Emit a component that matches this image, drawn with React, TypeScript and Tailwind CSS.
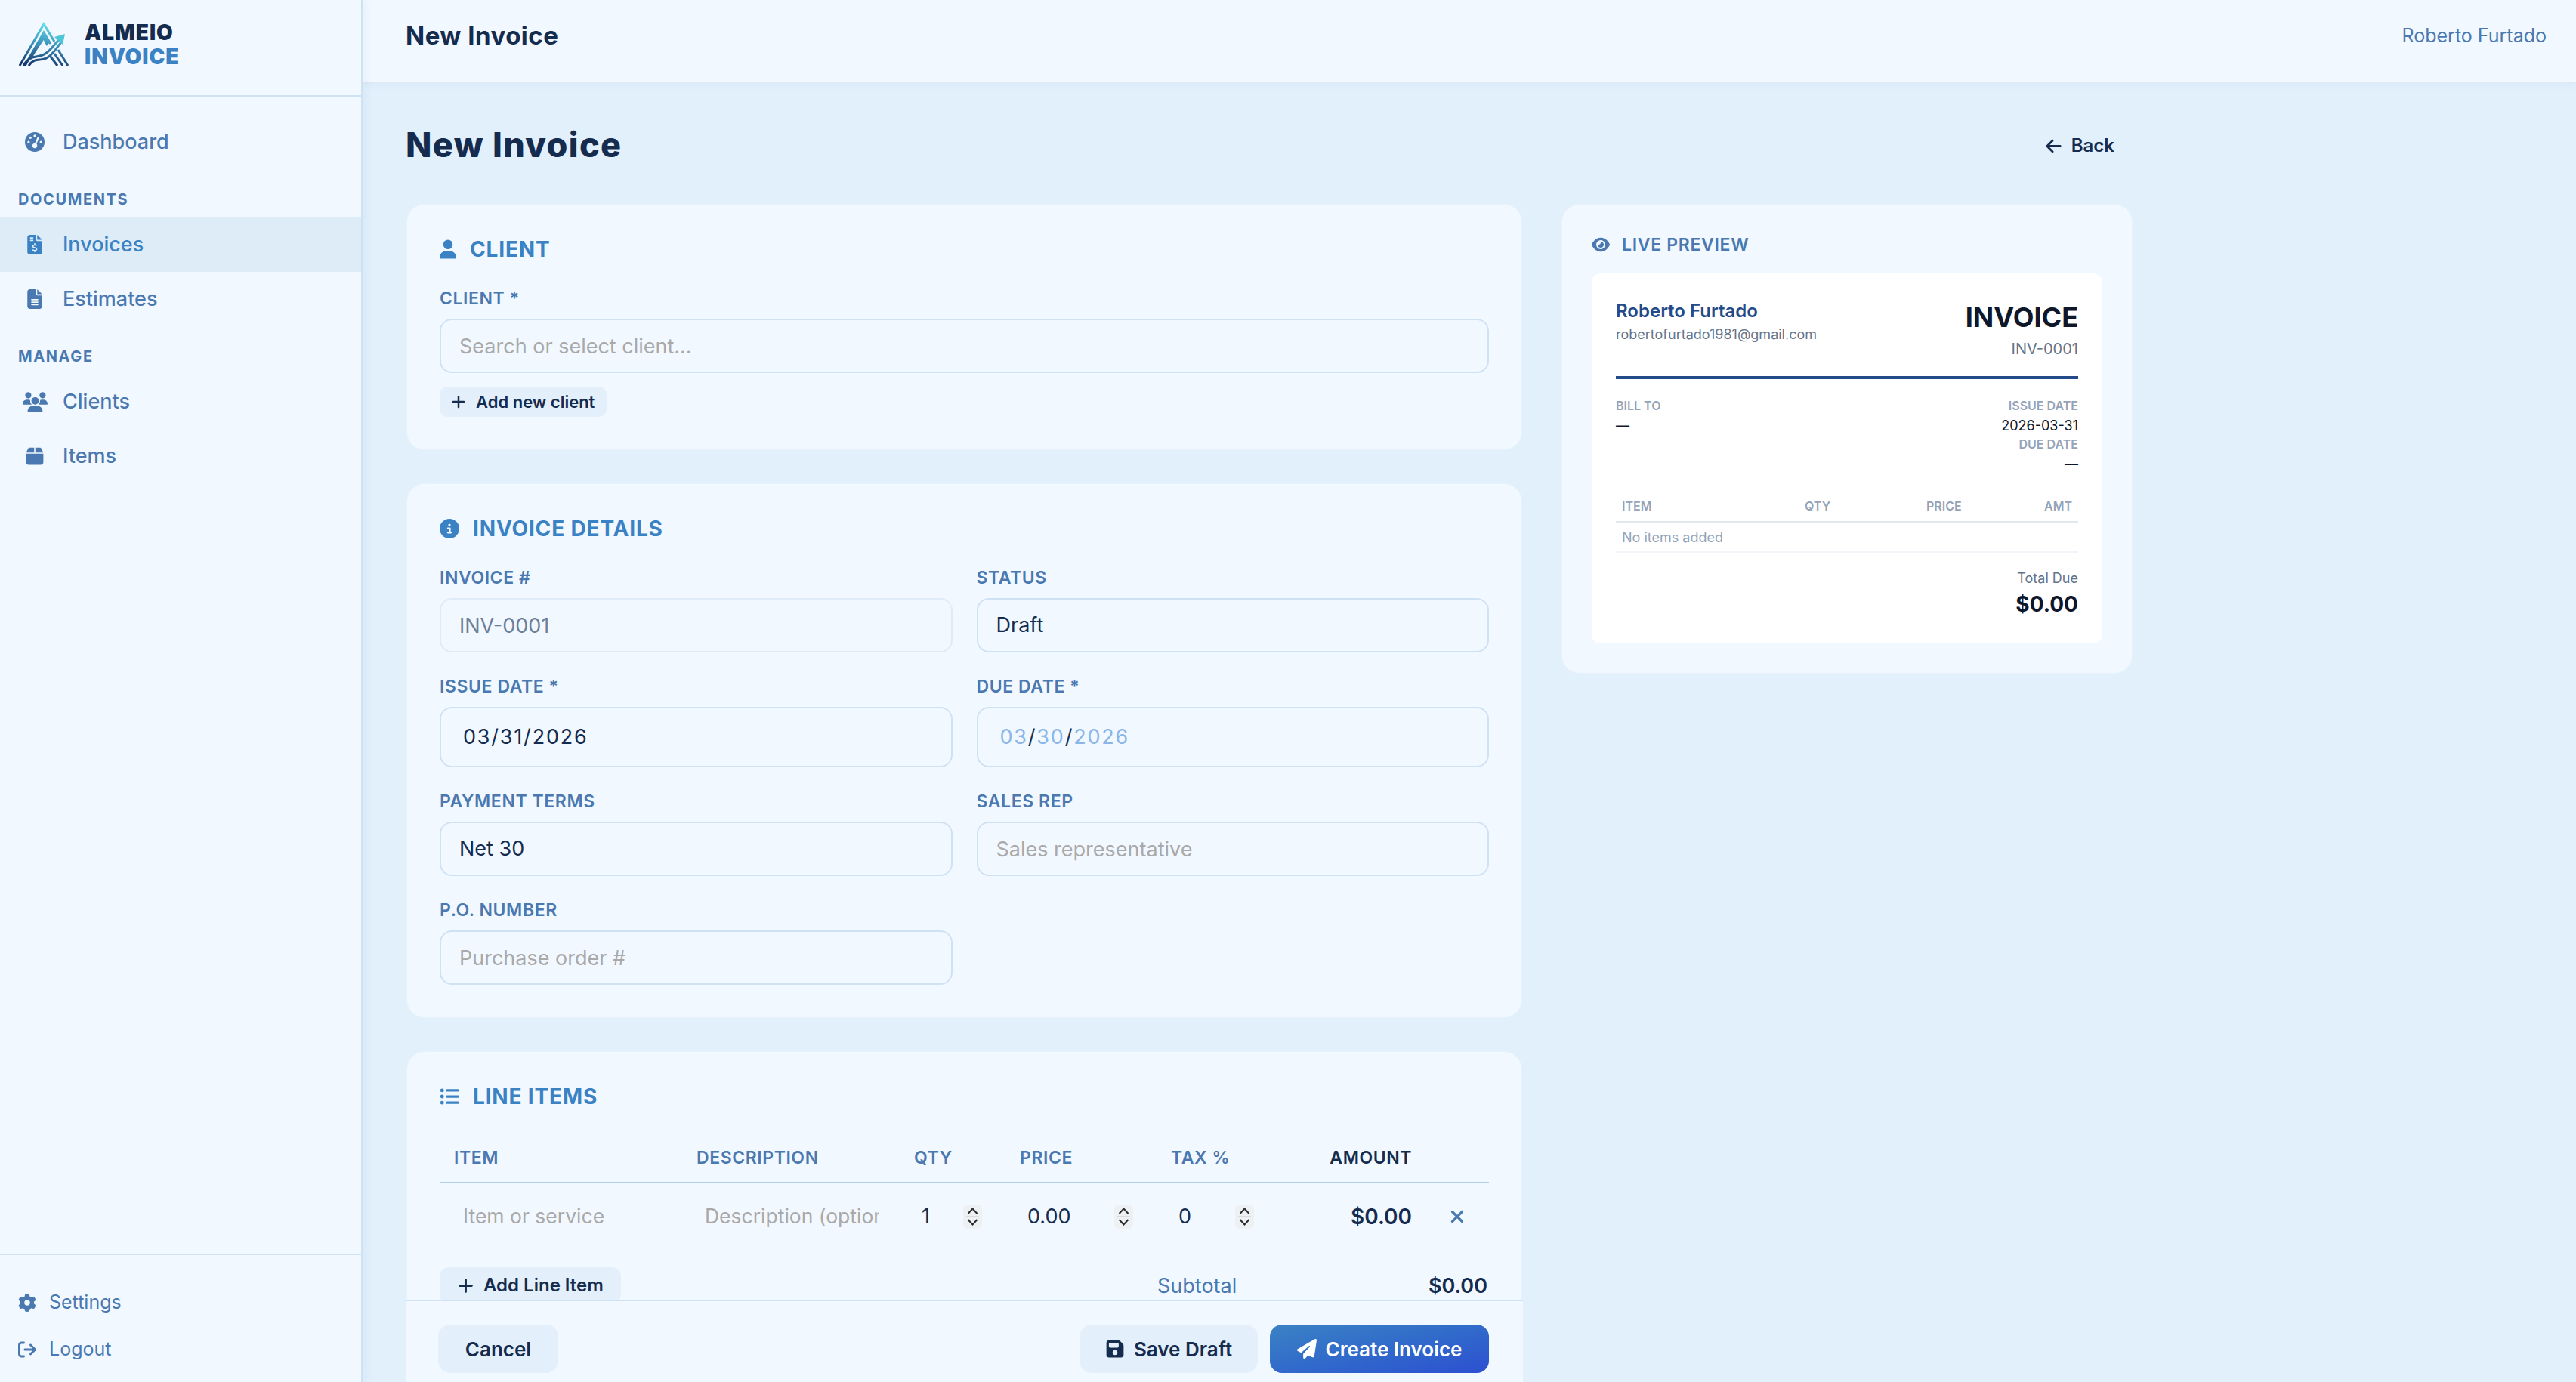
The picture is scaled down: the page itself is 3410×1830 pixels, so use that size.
import type { ReactNode } from 'react';
import {
  FaArrowLeft,
  FaArrowRightFromBracket,
  FaBox,
  FaCircleInfo,
  FaEye,
  FaFileInvoiceDollar,
  FaFileLines,
  FaFloppyDisk,
  FaGaugeHigh,
  FaGear,
  FaListUl,
  FaPaperPlane,
  FaPlus,
  FaUser,
  FaUsers,
  FaXmark,
} from 'react-icons/fa6';

const inputBase =
  'w-full h-[72px] rounded-[16px] border-2 bg-transparent px-[24px] text-[27px] outline-none placeholder:text-[#a9a9a9]';
const inputClass = `${inputBase} border-[#cfe2f3] text-[#152c4e]`;
const dateClass =
  'w-full h-[80px] rounded-[16px] border-2 border-[#cfe2f3] flex items-center pl-[29px] text-[27px] tracking-[1.8px] text-[#152c4e]';

const Logo = () => (
  <svg viewBox="24 29 70 60" className="w-[70px] h-[60px] shrink-0" fill="none">
    <defs>
      <linearGradient id="logoGrad" gradientUnits="userSpaceOnUse" x1="58" y1="30" x2="50" y2="88">
        <stop offset="0" stopColor="#62e3ea" />
        <stop offset="0.5" stopColor="#3a8fb8" />
        <stop offset="1" stopColor="#17366b" />
      </linearGradient>
    </defs>
    <g stroke="url(#logoGrad)" strokeWidth="3">
      <path d="M26 87 L58 32 L72 55" />
      <path d="M33 87 L37 80 L58 43 L67 58" />
      <path d="M40 78 L46 68 L58 50 L63 60" />
      <path d="M51 58 L58 48 L64 58" />
      <path d="M31 87 C41 70 50 78 60 71 C68 66 72 58 79 52" />
      <path d="M38 87 C46 75 54 82 63 76 C71 71 75 63 81 56" />
      <path d="M67 75 L76 87 M72 71 L83 87 M77 66 L90 87" />
    </g>
    <path d="M86 45 L72 49 L83 59 Z" fill="#4fc6d6" />
  </svg>
);

const NavItem = ({ icon, label, active }: { icon: ReactNode; label: string; active?: boolean }) => (
  <div
    className={`h-[72px] flex items-center pl-[26px] gap-[17px] text-[27px] font-medium ${
      active ? 'bg-[#deecf8] text-[#3a82c4]' : 'text-[#4a78b0]'
    }`}
  >
    <span className="w-[40px] flex justify-center shrink-0">{icon}</span>
    {label}
  </div>
);

const NavSection = ({ children }: { children: ReactNode }) => (
  <div className="h-[64px] flex items-end pb-[9px] pl-[24px] text-[20px] font-bold tracking-[0.08em] text-[#4a78b0]">
    {children}
  </div>
);

const Sidebar = () => (
  <aside className="w-[480px] shrink-0 h-full flex flex-col bg-[#f2f8ff] border-r-2 border-[#cfe2f3] shadow-[4px_0_12px_rgba(60,110,170,0.06)] z-10">
    <div className="h-[128px] shrink-0 flex pl-[24px] pt-[29px] gap-[18px] border-b-2 border-[#cfe2f3]">
      <Logo />
      <div className="-mt-[2px] flex flex-col font-black text-[28px] leading-[32px] tracking-[0.035em]">
        <span className="text-[#152c4e]">ALMEIO</span>
        <span className="text-[#3a82c4]">INVOICE</span>
      </div>
    </div>
    <nav className="flex-1 pt-[24px]">
      <NavItem icon={<FaGaugeHigh size={26} />} label="Dashboard" />
      <NavSection>DOCUMENTS</NavSection>
      <NavItem icon={<FaFileInvoiceDollar size={26} />} label="Invoices" active />
      <NavItem icon={<FaFileLines size={26} />} label="Estimates" />
      <NavSection>MANAGE</NavSection>
      <NavItem icon={<FaUsers size={33} />} label="Clients" />
      <NavItem icon={<FaBox size={26} />} label="Items" />
    </nav>
    <div className="h-[170px] shrink-0 border-t-2 border-[#cfe2f3] pt-[32px] flex flex-col text-[25px] text-[#4a78b0]">
      <div className="h-[62px] flex items-center pl-[24px] gap-[17px]">
        <FaGear size={24} />
        Settings
      </div>
      <div className="h-[62px] flex items-center pl-[24px] gap-[17px]">
        <FaArrowRightFromBracket size={24} />
        Logout
      </div>
    </div>
  </aside>
);

const Card = ({ children }: { children: ReactNode }) => (
  <section className="shrink-0 rounded-[24px] bg-[#f2f8ff] border border-[#e8f2fc] p-[43px]">{children}</section>
);

const CardTitle = ({ icon, children }: { icon: ReactNode; children: ReactNode }) => (
  <div className="h-[32px] flex items-center gap-[18px] text-[28px] font-bold tracking-[0.03em] text-[#3a82c4]">
    {icon}
    {children}
  </div>
);

const Field = ({ label, children }: { label: string; children: ReactNode }) => (
  <div className="flex flex-col">
    <label className="h-[30px] mb-[12px] flex items-center text-[23px] font-semibold tracking-[0.025em] text-[#4a78b0]">
      {label}
    </label>
    {children}
  </div>
);

const Select = ({ value }: { value: string }) => (
  <div className={`${inputClass} flex items-center`}>{value}</div>
);

const Spinner = () => (
  <div className="w-[25px] h-[32px] rounded-[6px] bg-[#eef1f4] flex flex-col items-center justify-center gap-[2px] text-[#2b2b2b]">
    <svg width="15" height="9" viewBox="0 0 15 9" fill="none" stroke="currentColor" strokeWidth="2">
      <path d="M1.5 8 L7.5 1.5 L13.5 8" />
    </svg>
    <span className="w-[17px] h-[2px] bg-[#d9dcdf]" />
    <svg width="15" height="9" viewBox="0 0 15 9" fill="none" stroke="currentColor" strokeWidth="2">
      <path d="M1.5 1 L7.5 7.5 L13.5 1" />
    </svg>
  </div>
);

const NumCell = ({ value }: { value: string }) => (
  <div className="pl-[29px] pr-[31px] flex items-center justify-between text-[27px] text-[#152c4e]">
    <span>{value}</span>
    <Spinner />
  </div>
);

const ClientCard = () => (
  <Card>
    <CardTitle icon={<FaUser size={26} className="w-[22px]" />}>CLIENT</CardTitle>
    <div className="mt-[34px]">
      <Field label="CLIENT *">
        <input className={inputClass} placeholder="Search or select client..." />
      </Field>
    </div>
    <button className="mt-[18px] h-[40px] w-[221px] rounded-[10px] bg-[#e3f0fb] flex items-center pl-[15px] gap-[13px] text-[22px] font-semibold text-[#152c4e]">
      <FaPlus size={20} />
      Add new client
    </button>
  </Card>
);

const DetailsCard = () => (
  <Card>
    <CardTitle icon={<FaCircleInfo size={26} />}>INVOICE DETAILS</CardTitle>
    <div className="mt-[34px] grid grid-cols-2 gap-x-[32px] gap-y-[30px]">
      <Field label="INVOICE #">
        <input className={`${inputBase} border-[#dfecf8] text-[#6b7f99]`} defaultValue="INV-0001" readOnly />
      </Field>
      <Field label="STATUS">
        <Select value="Draft" />
      </Field>
      <Field label="ISSUE DATE *">
        <div className={dateClass}>03/31/2026</div>
      </Field>
      <Field label="DUE DATE *">
        <div className={dateClass}>
          <span className="text-[#8ab6e8]">03</span>/<span className="text-[#8ab6e8]">30</span>/
          <span className="text-[#8ab6e8]">2026</span>
        </div>
      </Field>
      <Field label="PAYMENT TERMS">
        <Select value="Net 30" />
      </Field>
      <Field label="SALES REP">
        <input className={inputClass} placeholder="Sales representative" />
      </Field>
      <Field label="P.O. NUMBER">
        <input className={inputClass} placeholder="Purchase order #" />
      </Field>
    </div>
  </Card>
);

const gridCols = 'grid grid-cols-[321px_288px_140px_200px_160px_197px_82px]';

const LineItemsCard = () => (
  <Card>
    <CardTitle icon={<FaListUl size={26} />}>LINE ITEMS</CardTitle>
    <div
      className={`${gridCols} mt-[36px] h-[63px] border-b-2 border-[#b0cfe8] items-center pb-[2px] text-[23px] font-semibold tracking-[0.025em] text-[#4a78b0]`}
    >
      <div className="pl-[19px]">ITEM</div>
      <div className="pl-[19px]">DESCRIPTION</div>
      <div className="pl-[19px]">QTY</div>
      <div className="pl-[19px]">PRICE</div>
      <div className="pl-[19px]">TAX %</div>
      <div className="pr-[19px] text-right text-[#152c4e]">AMOUNT</div>
      <div />
    </div>
    <div className={`${gridCols} h-[88px] items-center`}>
      <input
        className="w-full pl-[31px] pr-[19px] bg-transparent text-[26.5px] outline-none placeholder:text-[#a9a9a9]"
        placeholder="Item or service"
      />
      <input
        className="w-full pl-[30px] pr-[28px] bg-transparent text-[26.5px] outline-none placeholder:text-[#a9a9a9]"
        placeholder="Description (optional)"
      />
      <NumCell value="1" />
      <NumCell value="0.00" />
      <NumCell value="0" />
      <div className="pr-[19px] text-right text-[28px] font-semibold text-[#152c4e]">$0.00</div>
      <div className="flex justify-center text-[#4a78b0]">
        <FaXmark size={26} />
      </div>
    </div>
    <div className="mt-[23px] flex justify-between">
      <button className="h-[48px] w-[240px] rounded-[12px] bg-[#e3f0fb] flex items-center pl-[23px] gap-[12px] text-[24px] font-semibold text-[#152c4e]">
        <FaPlus size={23} />
        Add Line Item
      </button>
      <div className="w-[439px] flex items-start justify-between pt-[5px] pr-[2px] h-[52px] text-[27px]">
        <span className="text-[#4a78b0]">Subtotal</span>
        <span className="font-semibold text-[#152c4e]">$0.00</span>
      </div>
    </div>
  </Card>
);

const Footer = () => (
  <footer className="h-[109px] shrink-0 bg-[#f2f8ff] border-t-2 border-[#cfe2f3] pl-[43px] pr-[45px] pt-[31px] flex justify-between items-start text-[26px] font-semibold">
    <button className="h-[64px] w-[159px] rounded-[16px] bg-[#e3f0fb] text-[#152c4e]">Cancel</button>
    <div className="flex gap-[16px]">
      <button className="h-[64px] w-[236px] rounded-[16px] bg-[#e3f0fb] text-[#152c4e] flex items-center justify-center gap-[12px]">
        <FaFloppyDisk size={26} />
        Save Draft
      </button>
      <button className="h-[64px] w-[290px] rounded-[16px] bg-gradient-to-br from-[#3b82c4] to-[#2d4fd0] text-white flex items-center justify-center gap-[12px]">
        <FaPaperPlane size={26} />
        Create Invoice
      </button>
    </div>
  </footer>
);

const Preview = () => (
  <aside className="w-[756px] shrink-0 ml-[51px] h-[622px] rounded-[24px] bg-[#f2f8ff] border border-[#e8f2fc] px-[39px] pt-[38px]">
    <div className="h-[30px] flex items-center gap-[16px] text-[23px] font-semibold tracking-[0.03em] text-[#4a78b0]">
      <FaEye size={24} />
      LIVE PREVIEW
    </div>
    <div className="mt-[23px] h-[490px] rounded-[12px] bg-white px-[32px] pt-[34px]">
      <div className="h-[102px] flex justify-between border-b-[4px] border-[#234b8a] box-content pb-0">
        <div>
          <div className="text-[24px] leading-[32px] font-semibold text-[#234b8a]">Roberto Furtado</div>
          <div className="text-[18px] leading-[30px] text-[#64748b]">robertofurtado1981@gmail.com</div>
        </div>
        <div className="text-right">
          <div className="text-[36px] leading-[48px] font-bold text-[#0f172a]">INVOICE</div>
          <div className="text-[20px] leading-[36px] text-[#64748b]">INV-0001</div>
        </div>
      </div>
      <div className="mt-[23px] flex justify-between text-[18px] leading-[25.5px]">
        <div>
          <div className="text-[16px] font-semibold text-[#94a3b8]">BILL TO</div>
          <div className="text-[#0f172a]">—</div>
        </div>
        <div className="text-right">
          <div className="text-[16px] font-semibold text-[#94a3b8]">ISSUE DATE</div>
          <div className="text-[#0f172a]">2026-03-31</div>
          <div className="text-[16px] font-semibold text-[#94a3b8]">DUE DATE</div>
          <div className="text-[#0f172a]">—</div>
        </div>
      </div>
      <div className="mt-[22px] h-[43px] grid grid-cols-[242px_161px_1fr_1fr] items-center border-b-2 border-[#e2e8f0] text-[16px] font-semibold text-[#94a3b8]">
        <div className="pl-[8px]">ITEM</div>
        <div className="pl-[8px]">QTY</div>
        <div className="pl-[8px]">PRICE</div>
        <div className="pr-[8px] text-right">AMT</div>
      </div>
      <div className="h-[40px] flex items-center pl-[8px] border-b-2 border-[#f1f5f9] text-[18px] text-[#94a3b8]">
        No items added
      </div>
      <div className="mt-[21px] text-right">
        <div className="text-[18px] leading-[26px] text-[#64748b]">Total Due</div>
        <div className="mt-[1px] text-[28px] leading-[40px] font-bold text-[#0f172a]">$0.00</div>
      </div>
    </div>
  </aside>
);

export default function App() {
  return (
    <div className="h-screen w-screen overflow-hidden flex bg-[#e2f0fc] [font-family:Inter,sans-serif]">
      <Sidebar />
      <main className="flex-1 min-w-0 h-full flex flex-col">
        <header className="h-[110px] shrink-0 bg-[#f2f8ff] border-b-2 border-[#dceaf6] shadow-[0_2px_10px_rgba(60,110,170,0.06)] pl-[57px] pr-[39px] pb-[12px] flex items-center justify-between">
          <h1 className="text-[33px] font-bold tracking-[0.015em] text-[#152c4e]">New Invoice</h1>
          <span className="text-[25px] text-[#4a78b0]">Roberto Furtado</span>
        </header>
        <div className="flex-1 min-h-0 pl-[57px] flex flex-col">
          <div className="w-[2285px] h-[64px] mt-[50px] mb-[46px] shrink-0 flex items-center justify-between pr-[23px]">
            <h2 className="text-[45px] font-extrabold tracking-[0.03em] text-[#152c4e]">New Invoice</h2>
            <button className="pt-[2px] flex items-center gap-[12px] text-[24px] font-semibold text-[#152c4e]">
              <FaArrowLeft size={23} />
              Back
            </button>
          </div>
          <div className="flex-1 min-h-0 flex">
            <div className="w-[1479px] shrink-0 h-full flex flex-col">
              <div className="flex-1 min-h-0 overflow-hidden px-px flex flex-col gap-[44px]">
                <ClientCard />
                <DetailsCard />
                <LineItemsCard />
              </div>
              <Footer />
            </div>
            <Preview />
          </div>
        </div>
      </main>
    </div>
  );
}
